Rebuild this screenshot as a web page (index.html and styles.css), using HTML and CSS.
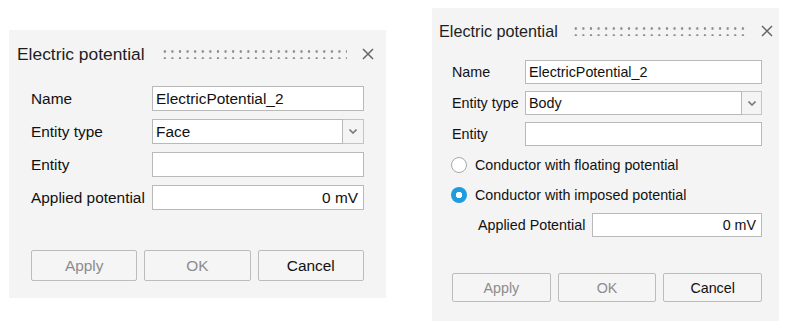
FILE: index.html
```html
<!DOCTYPE html>
<html lang="en">
<head>
    <meta charset="UTF-8">
    <title>Electric potential</title>
    <link rel="stylesheet" href="styles.css">
</head>
<body>
    <div class="page">
        <!-- Simple dialog -->
        <div class="dialog dialog-face">
            <div class="dialog-head">
                <span class="dialog-title">Electric potential</span>
                <span class="grip"></span>
                <svg class="close" viewBox="0 0 12 12"><path d="M1 1L11 11M11 1L1 11"/></svg>
            </div>
            <div class="fields">
                <label>Name</label>
                <div class="input">ElectricPotential_2</div>
                <label>Entity type</label>
                <div class="select">
                    <div class="input">Face</div>
                    <div class="drop"><svg viewBox="0 0 8 5"><path d="M0.5 0.5L4 4L7.5 0.5"/></svg></div>
                </div>
                <label>Entity</label>
                <div class="input"></div>
                <label>Applied potential</label>
                <div class="input value">0 mV</div>
            </div>
            <div class="actions">
                <button class="btn" disabled>Apply</button>
                <button class="btn" disabled>OK</button>
                <button class="btn">Cancel</button>
            </div>
        </div>

        <!-- Dialog with conductor options -->
        <div class="dialog dialog-body">
            <div class="dialog-head">
                <span class="dialog-title">Electric potential</span>
                <span class="grip"></span>
                <svg class="close" viewBox="0 0 12 12"><path d="M1 1L11 11M11 1L1 11"/></svg>
            </div>
            <div class="fields">
                <label>Name</label>
                <div class="input">ElectricPotential_2</div>
                <label>Entity type</label>
                <div class="select">
                    <div class="input">Body</div>
                    <div class="drop"><svg viewBox="0 0 8 5"><path d="M0.5 0.5L4 4L7.5 0.5"/></svg></div>
                </div>
                <label>Entity</label>
                <div class="input"></div>
            </div>
            <div class="radio-row first">
                <span class="radio"></span>
                <span>Conductor with floating potential</span>
            </div>
            <div class="radio-row">
                <span class="radio checked"></span>
                <span>Conductor with imposed potential</span>
            </div>
            <div class="sub-field">
                <label>Applied Potential</label>
                <div class="input value">0 mV</div>
            </div>
            <div class="actions">
                <button class="btn" disabled>Apply</button>
                <button class="btn" disabled>OK</button>
                <button class="btn">Cancel</button>
            </div>
        </div>
    </div>
</body>
</html>
```

FILE: styles.css
```css
* {
    margin: 0;
    padding: 0;
    box-sizing: border-box;
}

body {
    background: #ffffff;
    font-family: 'Liberation Sans', Arial, sans-serif;
    color: #111;
}

.page {
    display: flex;
    align-items: flex-start;
    padding-left: 9px;
    gap: 46px;
}

/* Dialog shell */
.dialog {
    background: #f4f4f4;
    display: flex;
    flex-direction: column;
}

.dialog-head {
    display: flex;
    align-items: center;
}

.dialog-title {
    color: #1e1e1e;
    white-space: nowrap;
}

.grip {
    flex: 1;
    height: 10px;
    background-image: radial-gradient(circle, #8a8a8a 1px, transparent 1.5px);
    background-size: 7.6px 7px;
    background-position: -2px -1px;
}

.close {
    width: 12px;
    height: 12px;
    fill: none;
    stroke: #666;
    stroke-width: 1.5;
}

/* Form fields */
.fields {
    display: grid;
    align-items: stretch;
}

.fields label {
    display: flex;
    align-items: center;
    white-space: nowrap;
}

.sub-field label {
    white-space: nowrap;
}

.input {
    background: #ffffff;
    border: 1px solid #b9b9b9;
    display: flex;
    align-items: center;
    padding: 0 3px;
    white-space: nowrap;
    overflow: hidden;
}

.input.value {
    justify-content: flex-end;
    padding-right: 5px;
}

.select {
    display: flex;
}

.select .input {
    flex: 1;
}

.drop {
    background: #f4f4f4;
    border: 1px solid #c4c4c4;
    border-left: none;
    display: flex;
    align-items: center;
    justify-content: center;
}

.drop svg {
    width: 8px;
    height: 5px;
    fill: none;
    stroke: #7a7a7a;
    stroke-width: 1.6;
}

/* Buttons */
.actions {
    display: grid;
    grid-template-columns: repeat(3, 1fr);
    gap: 7px;
}

.btn {
    font-family: inherit;
    font-size: inherit;
    background: #f5f5f5;
    border: 1px solid #bcbcbc;
    border-radius: 2px;
    color: #111;
}

.btn:disabled {
    color: #8c8c8c;
}

/* Left dialog */
.dialog-face {
    margin-top: 30px;
    width: 377px;
    height: 268px;
    font-size: 15.4px;
}

.dialog-face .dialog-head {
    height: 48px;
    padding: 0 12px 0 8px;
}

.dialog-face .dialog-title {
    font-size: 17.4px;
}

.dialog-face .grip {
    margin: 0 15px 0 18px;
}

.dialog-face .fields {
    margin: 8px 22px 0 22px;
    grid-template-columns: 121px 1fr;
    grid-auto-rows: 25px;
    row-gap: 8px;
}

.dialog-face .drop {
    width: 21px;
}

.dialog-face .actions {
    margin: 40px 22px 0 22px;
}

.dialog-face .btn {
    height: 31px;
}

/* Right dialog */
.dialog-body {
    margin-top: 8px;
    width: 347px;
    height: 313px;
    font-size: 14.3px;
}

.dialog-body .dialog-head {
    height: 46px;
    padding: 0 6px 0 7px;
}

.dialog-body .dialog-title {
    font-size: 16.2px;
}

.dialog-body .grip {
    margin: 0 16px 0 16px;
}

.dialog-body .fields {
    margin: 6px 17px 0 20px;
    grid-template-columns: 73px 1fr;
    grid-auto-rows: 24px;
    row-gap: 7px;
}

.dialog-body .drop {
    width: 20px;
}

.radio-row {
    display: flex;
    align-items: center;
    gap: 8px;
    height: 24px;
    margin: 6px 17px 0 19px;
}

.radio-row.first {
    margin-top: 7px;
}

.radio {
    width: 16px;
    height: 16px;
    border-radius: 50%;
    border: 1px solid #a8a8a8;
    background: #ffffff;
}

.radio.checked {
    border: none;
    background: radial-gradient(circle, #ffffff 0 3px, #1d9ce0 3.5px);
}

.sub-field {
    display: grid;
    grid-template-columns: 114px 1fr;
    grid-template-rows: 24px;
    align-items: center;
    margin: 6px 17px 0 46px;
}

.sub-field .input {
    height: 24px;
}

.dialog-body .actions {
    margin: 36px 17px 0 20px;
}

.dialog-body .btn {
    height: 29px;
}
```
